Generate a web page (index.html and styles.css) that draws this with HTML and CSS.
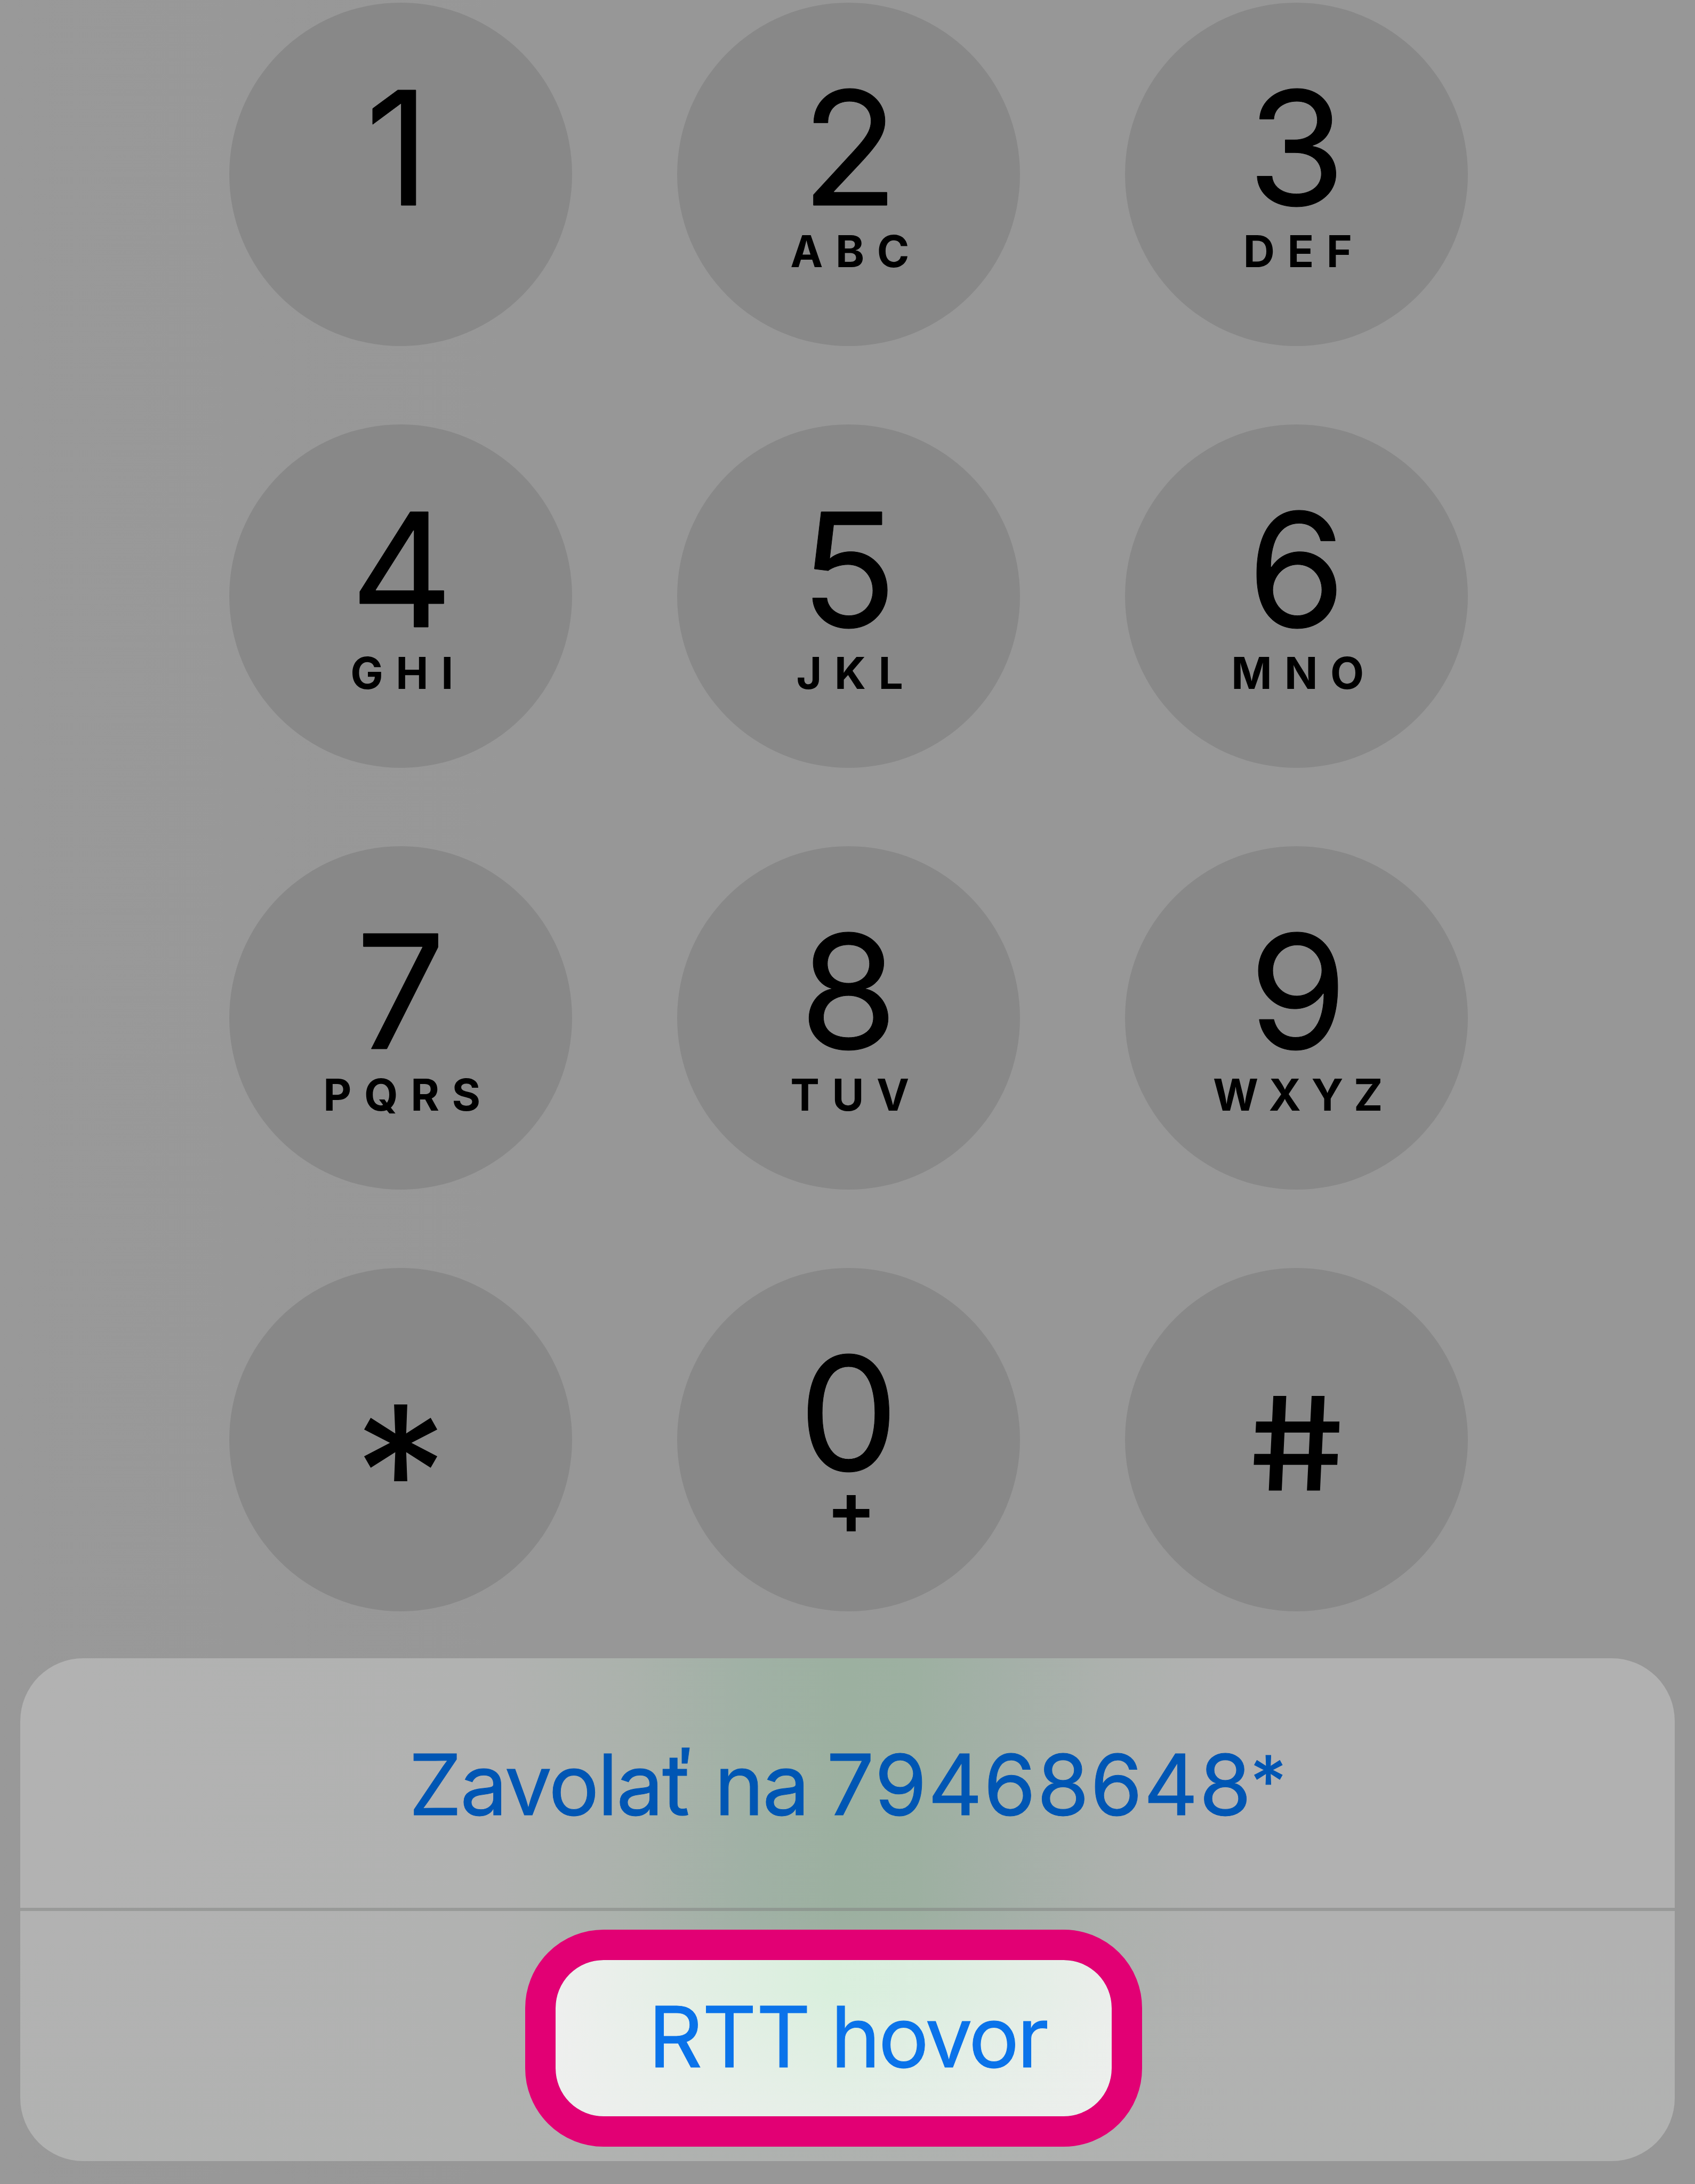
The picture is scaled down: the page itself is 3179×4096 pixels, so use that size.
FILE: index.html
```html
<!DOCTYPE html>
<html lang="sk">
<head>
<meta charset="utf-8">
<title>RTT hovor</title>
<link rel="stylesheet" href="styles.css">
</head>
<body>
<main class="screen">
  <section class="keypad">
    <div class="key"><span class="digit digit-1">1</span></div>
    <div class="key"><span class="digit digit-2">2</span><span class="letters">ABC</span></div>
    <div class="key"><span class="digit">3</span><span class="letters">DEF</span></div>
    <div class="key"><span class="digit digit-4">4</span><span class="letters">GHI</span></div>
    <div class="key"><span class="digit">5</span><span class="letters">JKL</span></div>
    <div class="key"><span class="digit">6</span><span class="letters">MNO</span></div>
    <div class="key"><span class="digit">7</span><span class="letters">PQRS</span></div>
    <div class="key"><span class="digit">8</span><span class="letters">TUV</span></div>
    <div class="key"><span class="digit digit-9">9</span><span class="letters letters-wide">WXYZ</span></div>
    <div class="key"><span class="digit star">*</span></div>
    <div class="key"><span class="digit">0</span><span class="letters plus">+</span></div>
    <div class="key"><span class="digit hash">#</span></div>
  </section>
  <section class="sheet">
    <div class="option option-call"><p class="label"><span class="word-call">Zavolať na </span><span class="number">79468648</span><span class="number-star">*</span></p></div>
    <div class="option option-rtt">
      <div class="highlight"></div>
      <p class="label"><span class="word-rtt">RTT </span><span class="word-hovor">hovor</span></p>
    </div>
  </section>
</main>
</body>
</html>
```
FILE: styles.css
```css
* { box-sizing: border-box; }
body { margin: 0; background: #979797; }

.screen {
  width: 3179px;
  height: 4096px;
  padding-top: 5px;
  overflow: hidden;
  background: linear-gradient(to right, #999 0%, #979797 30%, #979797 100%);
  font-family: Inter, "Liberation Sans", sans-serif;
}

.keypad {
  display: grid;
  grid-template-columns: repeat(3, 643px);
  grid-auto-rows: 644px;
  gap: 147px 197px;
  margin-left: 430px;
}

.key {
  display: flex;
  flex-direction: column;
  align-items: center;
  padding-top: 127px;
  border-radius: 50%;
  background: #888;
  color: #000;
}

.digit { font-size: 297px; line-height: 290px; -webkit-text-stroke: 1px currentColor; }
.digit-1 { margin-left: -12px; }
.digit-2 { margin-left: 5px; }
.digit-4 { margin-left: 4px; }
.digit-9 { margin-left: 6px; }

.star { margin-top: 112px; font-size: 352px; -webkit-text-stroke-width: 0; }
.hash { margin-top: 57px; font-size: 240px; transform: scaleX(1.17) skewX(7deg); -webkit-text-stroke-width: 3px; }

.letters {
  padding-left: 28px;
  font-size: 82px;
  font-weight: 700;
  line-height: 100px;
  letter-spacing: 23.5px;
}
.letters-wide { padding-left: 25px; letter-spacing: 19.5px; }
.plus {
  margin-top: -16px;
  padding-left: 10px;
  font-size: 136px;
  letter-spacing: 0;
}

.sheet {
  width: 3103px;
  height: 943px;
  margin: 88px 0 0 38px;
  border-radius: 118px;
  background:
    linear-gradient(to bottom, rgba(177, 178, 177, 0) 50%, rgba(177, 178, 177, 0.9) 100%),
    linear-gradient(to right, #b2b2b2 0, #b1b2b1 900px, #abb2ac 1140px, #a0b1a5 1370px, #9cb0a0 1540px, #9db0a1 1680px, #a3b0a7 1830px, #acb1ad 2030px, #b1b1b1 2260px, #b1b1b1 100%);
}

.option { position: relative; display: flex; justify-content: center; align-items: center; padding-top: 5px; }
.option-call { height: 474px; border-bottom: 6px solid rgba(128, 130, 128, 0.5); color: #0056b4; }
.option-rtt { height: 469px; padding-top: 3px; color: #0a73ea; }

.label { position: relative; margin: 0; font-size: 158px; line-height: 200px; white-space: pre; -webkit-text-stroke: 1px currentColor; }
.word-call { letter-spacing: -3px; }
.number { margin-left: -7px; letter-spacing: 2.2px; }
.number-star { margin-left: -4px; font-size: 134px; line-height: 0; vertical-align: 15px; }
.word-rtt { letter-spacing: -0.5px; }
.word-hovor { margin-left: -6px; letter-spacing: -4px; }

.highlight {
  position: absolute;
  left: 947px;
  top: 35px;
  width: 1157px;
  height: 407px;
  border: 57px solid #e20074;
  border-radius: 147px;
  background:
    linear-gradient(to bottom, rgba(238, 239, 238, 0) 20%, rgba(238, 239, 238, 0.6) 100%) padding-box,
    linear-gradient(to right, #eeefee 0%, #e3efe5 25%, #d9efdd 50%, #dceee0 68%, #ebeeeb 100%) padding-box;
}
```
